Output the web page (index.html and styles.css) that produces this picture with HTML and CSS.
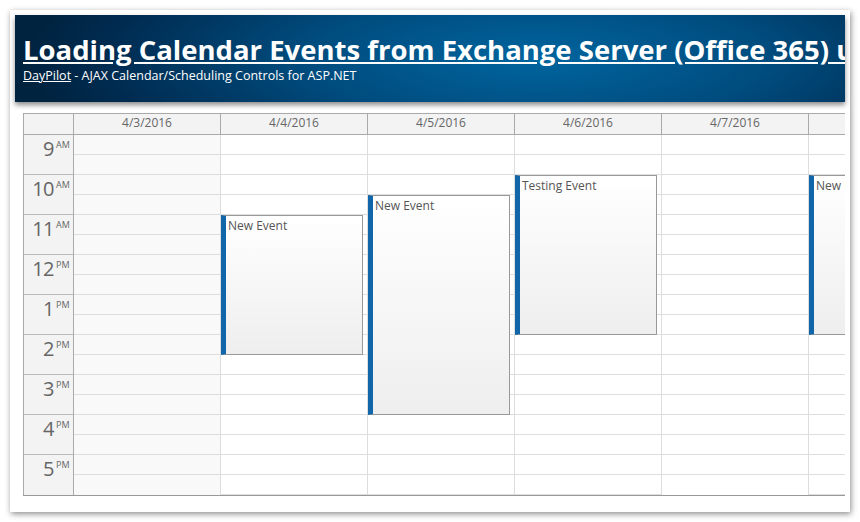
FILE: index.html
```html
<!DOCTYPE html>
<html lang="en">
<head>
  <meta charset="UTF-8" />
  <title>Loading Calendar Events from Exchange Server (Office 365)</title>
  <link rel="stylesheet" href="styles.css">
</head>
<body>
  <div id="pagina">
    <div id="cabecalho">
      <h1><a href="#">Loading Calendar Events from Exchange Server (Office 365) using EWS</a></h1>
      <div class="sub"><a href="#">DayPilot</a> - AJAX Calendar/Scheduling Controls for ASP.NET</div>
    </div>

    <div id="calendario">
      <div class="col-horas">
        <div class="cab-dia"></div>
        <div class="hora"><span class="num">9</span><span class="ampm">AM</span></div>
        <div class="hora"><span class="num">10</span><span class="ampm">AM</span></div>
        <div class="hora"><span class="num">11</span><span class="ampm">AM</span></div>
        <div class="hora"><span class="num">12</span><span class="ampm">PM</span></div>
        <div class="hora"><span class="num">1</span><span class="ampm">PM</span></div>
        <div class="hora"><span class="num">2</span><span class="ampm">PM</span></div>
        <div class="hora"><span class="num">3</span><span class="ampm">PM</span></div>
        <div class="hora"><span class="num">4</span><span class="ampm">PM</span></div>
        <div class="hora"><span class="num">5</span><span class="ampm">PM</span></div>
      </div>
      <div id="dias"></div>
    </div>
  </div>

  <script>
    const dias = [
      { data: "4/3/2016", fimDeSemana: true, eventos: [] },
      { data: "4/4/2016", eventos: [{ texto: "New Event", inicio: 11, fim: 14.5 }] },
      { data: "4/5/2016", eventos: [{ texto: "New Event", inicio: 10.5, fim: 16 }] },
      { data: "4/6/2016", eventos: [{ texto: "Testing Event", inicio: 10, fim: 14 }] },
      { data: "4/7/2016", eventos: [] },
      { data: "4/8/2016", eventos: [{ texto: "New Event", inicio: 10, fim: 14 }] }
    ];

    const HORA = 40;

    function montarDias() {
      const div = document.getElementById("dias");
      div.innerHTML = dias.map(d => {
        const celulas = Array.from({ length: 18 }, () => '<div class="celula"></div>').join("");
        const eventos = d.eventos.map(e =>
          `<div class="evento" style="top:${(e.inicio - 9) * HORA}px;height:${(e.fim - e.inicio) * HORA}px">${e.texto}</div>`
        ).join("");
        return `<div class="col-dia${d.fimDeSemana ? " fds" : ""}">
          <div class="cab-dia">${d.data}</div>
          <div class="corpo">${celulas}${eventos}</div>
        </div>`;
      }).join("");
    }

    montarDias();
  </script>
</body>
</html>
```

FILE: styles.css
```css
body {
  margin: 0;
  background-color: #fff;
  font-family: "Open Sans", "Noto Sans", sans-serif;
}

#pagina {
  margin: 10px;
  width: 830px;
  height: 492px;
  padding: 5px;
  background: #fff;
  box-shadow: 1px 2px 6px rgba(0, 0, 0, 0.45);
}

#cabecalho {
  height: 87px;
  padding: 0 8px;
  overflow: hidden;
  white-space: nowrap;
  color: #fff;
  background: radial-gradient(ellipse 62% 160% at 63% 50%, #00659f 0%, #004c7e 45%, #002b50 85%, #00233f 100%);
  box-shadow: 0 3px 5px rgba(0, 0, 0, 0.45);
}

#cabecalho a {
  color: #fff;
}

#cabecalho h1 {
  margin: 0;
  padding-top: 19px;
  font-size: 27.5px;
  line-height: 32px;
  font-weight: bold;
}

.sub {
  margin-top: 2px;
  font-size: 12.5px;
  line-height: 16px;
}

#calendario {
  display: flex;
  margin: 11px 0 0 8px;
  overflow: hidden;
  border-bottom: 1px solid #999;
  width: 822px;
}

.col-horas {
  flex: none;
  width: 51px;
  box-sizing: border-box;
  border-left: 1px solid #aaa;
  border-right: 1px solid #aaa;
  background: #f3f3f3;
}

#dias {
  display: flex;
}

.cab-dia {
  height: 22px;
  box-sizing: border-box;
  border-top: 1px solid #aaa;
  border-bottom: 1px solid #aaa;
  background: #f3f3f3;
  color: #666;
  font-size: 12px;
  line-height: 18px;
  text-align: center;
}

.col-dia {
  flex: none;
  width: 147px;
}

.col-dia .cab-dia {
  border-right: 1px solid #aaa;
}

.hora {
  height: 40px;
  box-sizing: border-box;
  border-bottom: 1px solid #bbb;
  color: #666;
  text-align: right;
  padding: 2px 2px 0 0;
}

.hora:last-child {
  border-bottom: none;
}

.num {
  font-size: 20px;
  line-height: 24px;
  letter-spacing: -0.5px;
}

.ampm {
  display: inline-block;
  width: 15px;
  margin-left: 2px;
  font-size: 9px;
  line-height: 10px;
  vertical-align: top;
  margin-top: 3px;
  text-align: left;
}

.corpo {
  position: relative;
}

.celula {
  height: 20px;
  box-sizing: border-box;
  border-bottom: 1px solid #ddd;
  border-right: 1px solid #ddd;
}

.celula:last-child {
  border-bottom: none;
}

.fds .celula {
  background: #f9f9f9;
}

.evento {
  position: absolute;
  left: 0;
  width: 142px;
  box-sizing: border-box;
  border: 1px solid #999;
  border-left: 5px solid #1066a8;
  background: linear-gradient(to bottom, #fff, #eee);
  color: #555;
  font-size: 12px;
  line-height: 16px;
  padding: 2px 0 0 2px;
  overflow: hidden;
  white-space: nowrap;
}
```
